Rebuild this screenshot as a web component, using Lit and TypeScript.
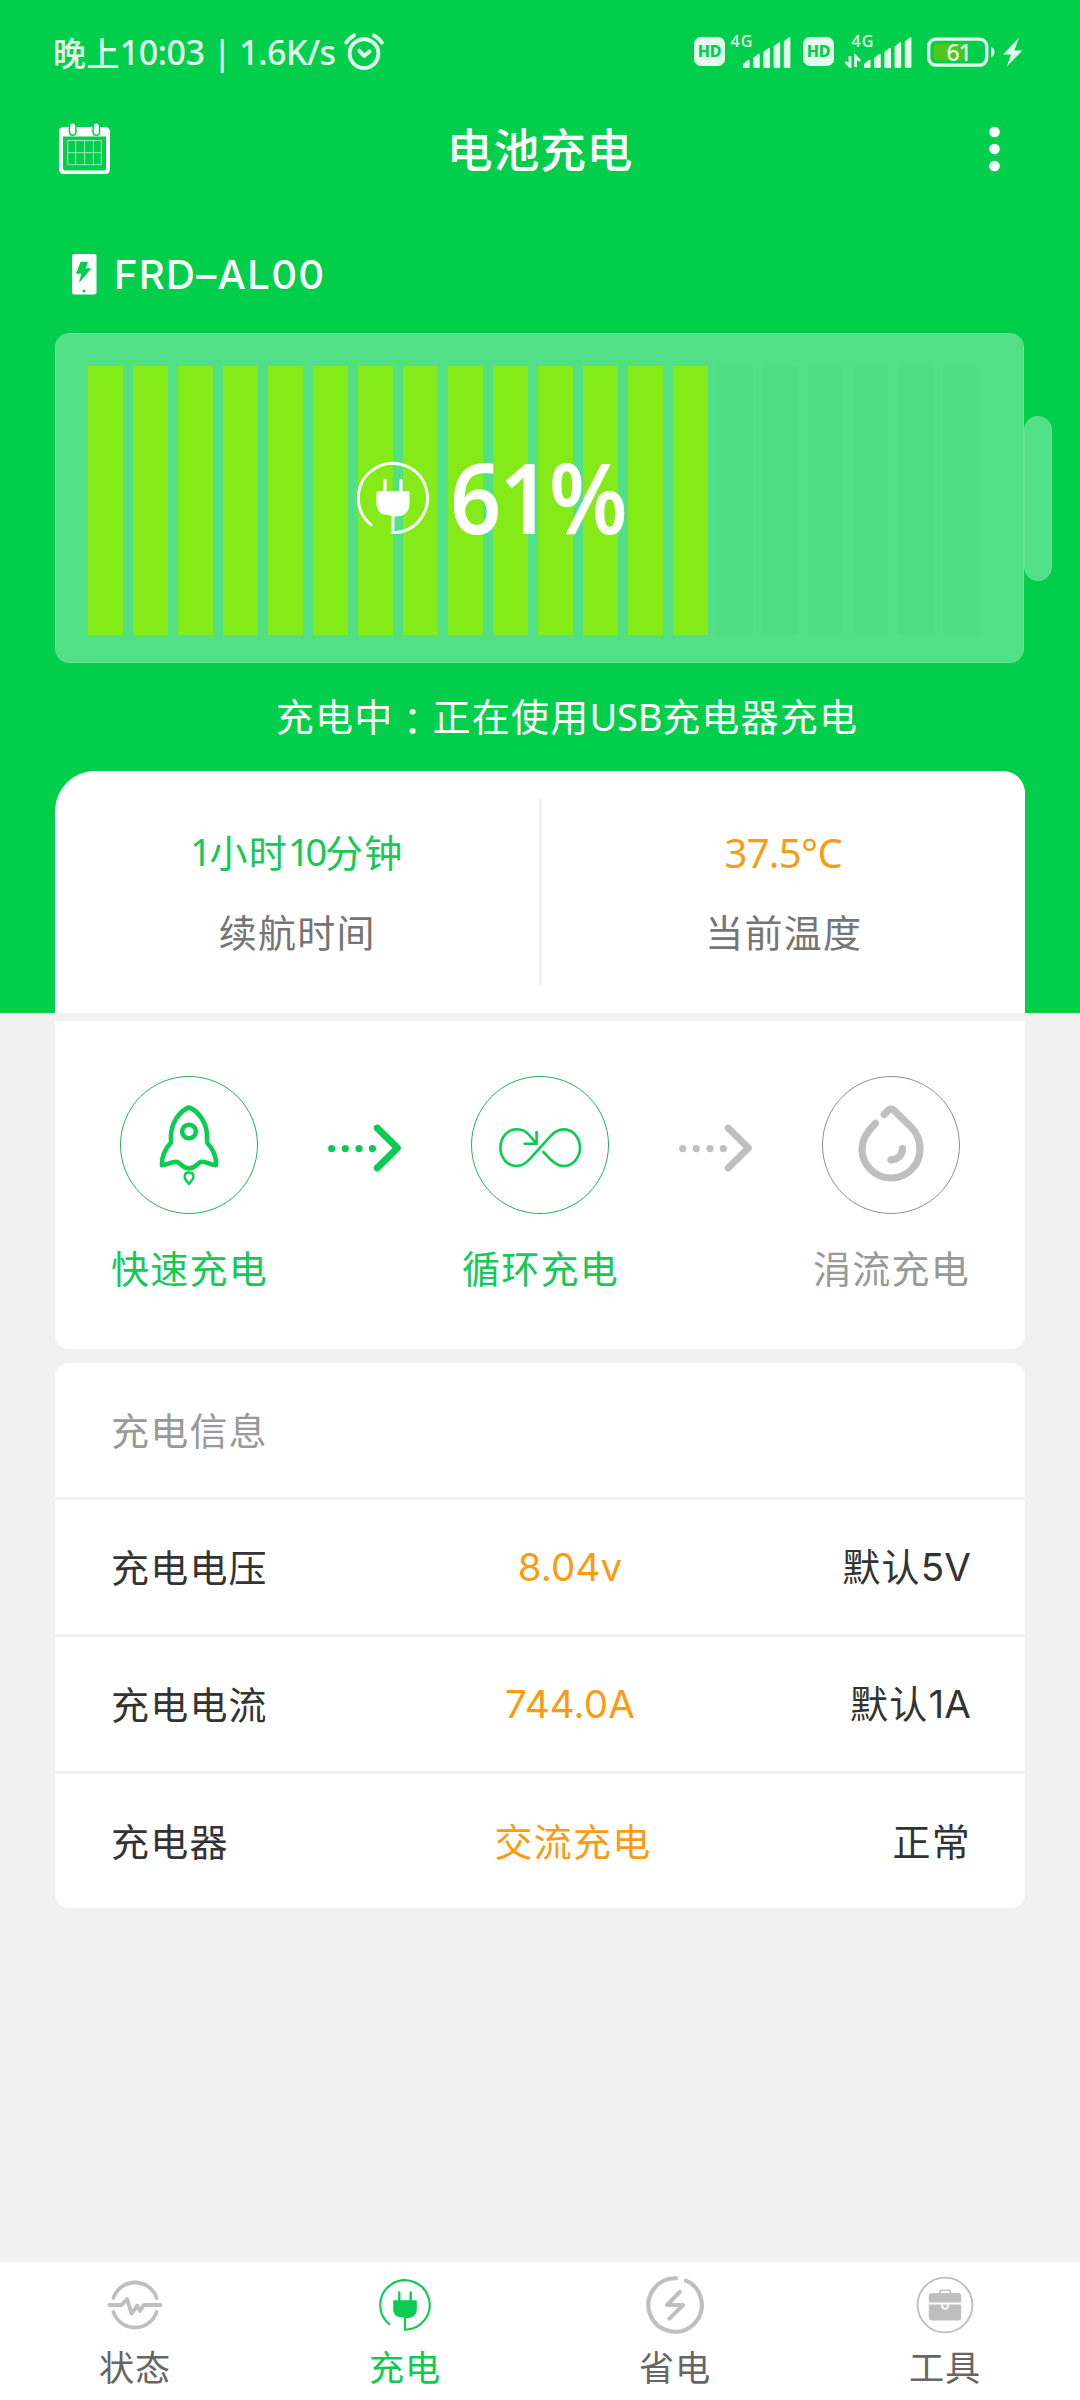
import { LitElement, html, svg, css } from "lit";
import { customElement, property } from "lit/decorators.js";
import { classMap } from "lit/directives/class-map.js";

const plugArt = svg`
  <path d="M-15.6 19.2 A24.7 24.7 0 1 1 0 24.7 V12" fill="none" stroke="currentColor" stroke-width="2.1" stroke-linecap="round"/>
  <path d="M-5.7 -4 V-12.6 M5.7 -4 V-12.6" fill="none" stroke="currentColor" stroke-width="2.3" stroke-linecap="round"/>
  <path d="M-11.8 -4 Q-11.8 -4.8 -11 -4.8 H11 Q11.8 -4.8 11.8 -4 V4 C11.8 10 8 13.2 2 13.2 L-8 11.4 Q-11.8 9 -11.8 4Z" fill="currentColor"/>`;

const navArt: Record<string, unknown> = {
  status: svg`<g fill="none" stroke="currentColor" stroke-width="3.8" stroke-linecap="round" stroke-linejoin="round">
    <path d="M-21.6 -7 A22.8 22.8 0 0 1 21.6 -7 M-21.6 7 A22.8 22.8 0 0 0 21.6 7"/>
    <path d="M-25.6 0 H-13.3 L-8 -6 L-3.4 8.6 L2.2 .6 L5 6 L8.8 0 H25.6"/></g>`,
  charge: plugArt,
  save: svg`<g fill="none" stroke="currentColor" stroke-width="4.1" stroke-linecap="round" stroke-linejoin="round">
    <path d="M11 -24.4 A26.7 26.7 0 1 1 1 -26.7"/>
    <path d="M4.8 -13 L-8 0 H8.2 L-5.6 13.6"/></g>`,
  tools: svg`
    <circle r="27.4" fill="none" stroke="currentColor" stroke-width="1.9"/>
    <path d="M-5.2 -11 V-13.4 Q-5.2 -14.7 -4 -14.7 H4.2 Q5.4 -14.7 5.4 -13.4 V-11" fill="none" stroke="currentColor" stroke-width="1.6"/>
    <path d="M-16.2 -2.5 V-9 Q-16.2 -12 -13.2 -12 H13.2 Q16.2 -12 16.2 -9 V-2.5Z M-16.2 -.6 H16.2 V12.5 Q16.2 15.5 13.2 15.5 H-13.2 Q-16.2 15.5 -16.2 12.5Z" fill="currentColor"/>
    <path d="M-3 -1.4 V1 A3 3 0 0 0 3 1 V-1.4" fill="none" stroke="#fff" stroke-width="1.7"/>`,
};

const stageArt: Record<string, unknown> = {
  rocket: svg`<g fill="none" stroke="currentColor" stroke-linejoin="round">
    <path stroke-width="4.6" d="M0 -37.5 C-10 -34 -18 -21 -18 -9 V-2.5 C-24 4 -27.5 12 -27 20.3 C-22 19.8 -18 16.8 -13 16.8 C-8.5 16.8 -7 23.5 0 23.5 C7 23.5 8.5 16.8 13 16.8 C18 16.8 22 19.8 27 20.3 C27.5 12 24 4 18 -2.5 V-9 C18 -21 10 -34 0 -37.5Z"/>
    <circle cy="-13.5" r="6.8" stroke-width="4.6"/>
    <path stroke-width="2.4" d="M0 27.5 C-5 27.5 -5.2 32 -3.4 34.6 L0 39 L3.4 34.6 C5.2 32 5 27.5 0 27.5Z"/></g>`,
  loop: svg`<path fill="none" stroke="currentColor" stroke-width="2.6" stroke-linecap="round"
    d="M-3.4 -1.2 L-10 -9 C-14 -13.5 -17 -15.8 -23.5 -15.8 C-33 -15.8 -39.6 -7 -39.6 2.8 C-39.6 12.5 -33 21 -23.5 21 C-17.5 21 -14.5 18.5 -9 12.6 L11 -9.4 C15 -13.6 18 -15.6 23.5 -15.6 C33 -15.6 40 -7 40 2.8 C40 12.5 33 21 23.5 21 C17.5 21 14 18 10 14 L3.4 7 M-3.4 -13 V-1.2 H-15.4"/>`,
  drop: svg`<g fill="none" stroke="currentColor" stroke-width="7.2" stroke-linecap="round" stroke-linejoin="round">
    <path d="M-15.5 -21.6 C-24 -13.5 -29 -6 -29 4 A29 29 0 0 0 29 4 C29 -6 26 -12 20 -18 L3.5 -34.3 Q0 -37.5 -3 -34.6 L-6.8 -30.6"/>
    <path d="M11.5 3.5 C11.5 10 7 14.6 0 14.8"/></g>`,
};

@customElement("status-bar")
export class StatusBar extends LitElement {
  static styles = css`
    :host { display: flex; height: 106px; padding: 0 57px 0 53px; align-items: center; color: #e3fbeb;
      font-family: "Noto Sans", "Noto Sans CJK SC", sans-serif; box-sizing: border-box; }
    .clock { display: flex; white-space: pre; font-size: 34px; line-height: 50px; font-weight: 500; margin-top: -2px; }
    .cn { font-family: "Noto Sans CJK SC", sans-serif; font-size: 33px; letter-spacing: 0.4px; }
    .num { letter-spacing: -0.5px; }
    .alarm { width: 42px; height: 42px; margin-left: 7px; margin-top: -3px; }
    .right { margin-left: auto; display: flex; align-items: flex-start; height: 34px; margin-top: -5px; }
    .hd { width: 31px; height: 29px; margin-top: 3px; border-radius: 7px; background: #e3fbeb; color: #01cf4c;
      font: 800 16px/29px "Noto Sans", sans-serif; text-align: center; letter-spacing: -0.3px; }
    .net { display: block; width: 62px; height: 44px; margin: -10px 11px 0 5px; }
    .net.second { width: 69px; margin: -10px 14px 0 10px; }
    .g { font: 500 16px "Noto Sans", sans-serif; }
    .batt { display: block; width: 96px; height: 34px; }
    .pct { font: 500 23px "Noto Sans", sans-serif; letter-spacing: -1px; }
  `;
  private bars(x: number) {
    const tops = [26, 20, 14, 8.5, 3.5];
    return tops.map((t, i) => {
      const l = x + i * 10.2;
      return svg`<path fill="currentColor" d="M${l} 32.5 V${t + 4} L${l + 5} ${t} Q${l + 6.6} ${t - 1} ${l + 6.6} ${t + 1} V32.5 Q${l + 6.6} 34 ${l + 5.4} 34 H${l + 1.2} Q${l} 34 ${l} 32.5Z"/>`;
    });
  }
  render() {
    return html`
      <div class="clock"><span class="cn">晚上</span><span class="num">10:03 | 1.6K/s</span></div>
      <svg class="alarm" viewBox="0 0 42 42" fill="none" stroke="currentColor" stroke-width="3.9" stroke-linecap="round" stroke-linejoin="round">
        <circle cx="21" cy="22.6" r="14.4"/><path d="M3.2 11.6 Q6 7 11 4.4 M38.8 11.6 Q36 7 31 4.4 M16.2 19.6 L21 25 L26.6 20.4"/>
      </svg>
      <div class="right">
        <div class="hd">HD</div>
        <svg class="net" viewBox="0 -10 62 44"><text class="g" x="0.5" y="13" fill="currentColor">4G</text>${this.bars(13)}</svg>
        <div class="hd">HD</div>
        <svg class="net second" viewBox="0 -10 69 44">
          <text class="g" x="7.5" y="13" fill="currentColor">4G</text>
          <path d="M6 22 V32.5 L1.6 28 M11.6 33 V22.5 L16 27" fill="none" stroke="currentColor" stroke-width="2.8"/>${this.bars(20)}
        </svg>
        <svg class="batt" viewBox="0 0 96 34">
          <rect x="1.7" y="5.1" width="58" height="26" rx="7" fill="none" stroke="currentColor" stroke-width="3.4"/>
          <rect x="6.5" y="10" width="31" height="16.4" rx="3" fill="#4fc71a"/>
          <path d="M64 13 Q67.6 14 67.6 18 Q67.6 22 64 23.4Z" fill="currentColor"/>
          <text class="pct" x="19.5" y="26.6" fill="currentColor">61</text>
          <path d="M92 3.6 L76 20.6 H84 L79.6 32.8 L95.4 16.6 H87.4Z" fill="currentColor"/>
        </svg>
      </div>`;
  }
}

@customElement("battery-meter")
export class BatteryMeter extends LitElement {
  @property({ type: Number }) level = 0;
  static styles = css`
    :host { display: flex; align-items: center; margin: 18px 0 0 55px; height: 330px; }
    .body { position: relative; box-sizing: border-box; width: 969px; height: 330px; padding: 32px 0 27px 32px; display: flex; gap: 10px;
      border: 1px solid #67e394; border-radius: 14px; background: #53df85; }
    .cell { width: 35px; background: #4edd83; }
    .cell.on { background: #84eb19; }
    .cap { box-sizing: border-box; width: 28px; height: 165px; border: 1px solid #67e394; border-radius: 14px; background: #53df85; }
    .readout { position: absolute; inset: 0; padding-left: 295px; display: flex; align-items: center; color: #fff; gap: 15px; }
    .plug { width: 84px; height: 84px; }
    .value { font: 600 97px/120px "Noto Sans", sans-serif; letter-spacing: -2px; margin-top: -4px; transform: scaleX(0.925); transform-origin: left; }
  `;
  render() {
    const on = Math.round((this.level / 100) * 22.5);
    return html`
      <div class="body">
        ${Array.from({ length: 20 }, (_, i) => html`<div class=${classMap({ cell: true, on: i < on })}></div>`)}
        <div class="readout">
          <svg class="plug" viewBox="-30 -30 60 60">${plugArt}</svg>
          <span class="value">${this.level}%</span>
        </div>
      </div>
      <div class="cap"></div>`;
  }
}

@customElement("app-root")
export class AppRoot extends LitElement {
  static styles = css`
    :host { display: flex; flex-direction: column; width: 1080px; height: 2400px; overflow: hidden; background: #f1f1f1;
      font-family: "Noto Sans CJK SC", sans-serif; font-size: 38px; letter-spacing: 1.2px; line-height: 56px; color: #333; }
    .top { background: #01cf4c; height: 1013px; color: #fff; display: flex; flex-direction: column; }
    .bar { height: 88px; padding: 0 80px 0 59px; display: grid; grid-template-columns: 1fr auto 1fr; align-items: center; }
    .calendar { width: 51px; height: 52px; margin-top: -2px; }
    .title { font-size: 46px; font-weight: 500; line-height: 64px; letter-spacing: 0.6px; margin-top: -6px; padding-left: 21px; }
    .more { width: 11px; height: 46px; margin-top: -2px; justify-self: end; }
    .device { height: 81px; margin-top: 40px; padding-left: 72px; display: flex; align-items: center; gap: 17px; }
    .phone { width: 25px; height: 41px; }
    .model { font: 500 40px/56px "Inter", sans-serif; letter-spacing: 1.3px; }
    .note { height: 108px; box-sizing: border-box; padding: 0 0 3px 54px; display: flex; align-items: center; justify-content: center; }
    .colon { display: inline-block; transform: translateY(4px); font-family: "Noto Sans CJK TC", sans-serif; }
    .usb { font-family: "Noto Sans", sans-serif; letter-spacing: -0.2px; }
    .card { margin: 0 55px; background: #fff; box-sizing: border-box; }
    .summary { height: 242px; border-radius: 40px 22px 0 0; padding: 28px 0; display: flex; }
    .rule { width: 3px; background: #f1f1f1; }
    .stat { flex: 1; display: flex; flex-direction: column; align-items: center; gap: 24px; padding-top: 24px; line-height: 56px; }
    .stat .v { display: flex; height: 56px; }
    .time { color: #14c955; }
    .temp { color: #f99c12; font-family: "Noto Sans", sans-serif; font-size: 40px; letter-spacing: -0.7px; padding-top: 2px; box-sizing: border-box; }
    .dig { font-family: "Noto Sans", sans-serif; letter-spacing: -4.2px; margin-right: 2px; }
    .lab { color: #757575; padding-left: 1px; }
    .stages { margin-top: 8px; height: 328px; border-radius: 0 0 14px 14px; padding: 55px 50px 0; display: flex; justify-content: space-between; align-items: flex-start; }
    .stage { width: 168px; display: flex; flex-direction: column; align-items: center; color: #14c955; }
    .stage.idle { color: #999; }
    .ring { display: block; width: 138px; height: 138px; }
    .name { margin-top: 25px; white-space: nowrap; padding-left: 1px; }
    .art { color: #09cd50; }
    .idle .art { color: #bfbfbf; }
    .arrow { width: 74px; height: 48px; margin-top: 48px; color: #09cd50; }
    .arrow.idle { color: #bfbfbf; }
    .info { margin-top: 14px; height: 545px; border-radius: 14px; overflow: hidden; display: flex; flex-direction: column; gap: 3px; background: #f1f1f1; }
    .row { flex: 1; background: #fff; padding: 0 54px 2px 56px; display: grid; grid-template-columns: 341px 242px 1fr; align-items: center; box-sizing: border-box; }
    .row .mid { text-align: center; color: #f99c12; }
    .row .mid .lat { margin-right: 6px; }
    .row .end { text-align: right; }
    .caption { color: #999; }
    .lat { font-family: "Inter", sans-serif; font-size: 38.6px; letter-spacing: 0.1px; }
    .nav { margin-top: auto; height: 138px; background: #fff; display: grid; grid-template-columns: repeat(4, 1fr); }
    .tab { display: flex; flex-direction: column; align-items: center; padding-top: 13px; color: #666; font-size: 35.2px; letter-spacing: 0.8px; line-height: 50px; }
    .tab svg { width: 60px; height: 60px; color: #bfbfbf; }
    .tab span { margin-top: 6px; }
    .tab.active, .tab.active svg { color: #0bcb50; }
  `;

  private stage(art: string, name: string, idle = false) {
    return html`<div class=${classMap({ stage: true, idle })}>
      <svg class="ring" viewBox="-69 -69 138 138">
        <circle r="68.5" fill="none" stroke=${idle ? "#8f8f8f" : "#22b355"} stroke-width="1"/>
        <g class="art">${stageArt[art]}</g>
      </svg>
      <div class="name">${name}</div></div>`;
  }
  private arrow(idle = false) {
    return html`<svg class=${classMap({ arrow: true, idle })} viewBox="0 0 74 48">
      ${[3.7, 17.3, 31, 44.4].map((x) => svg`<circle cx=${x} cy="24.6" r="3.6" fill="currentColor"/>`)}
      <path d="M49.2 4 L69.4 24 L49.2 44" fill="none" stroke="currentColor" stroke-width="6.8" stroke-linecap="round" stroke-linejoin="round"/>
    </svg>`;
  }
  private row(label: string, mid: unknown, end: unknown) {
    return html`<div class="row"><div>${label}</div><div class="mid">${mid}</div><div class="end">${end}</div></div>`;
  }
  private tab(icon: string, label: string, active = false) {
    return html`<div class=${classMap({ tab: true, active })}><svg viewBox="-30 -30 60 60">${navArt[icon]}</svg><span>${label}</span></div>`;
  }

  render() {
    return html`
      <div class="top">
        <status-bar></status-bar>
        <div class="bar">
          <svg class="calendar" viewBox="0 0 51 52">
            <path fill="#fff" fill-rule="evenodd" d="M5 4 H46 Q51 4 51 9 V46 Q51 51 46 51 H5 Q0 51 0 46 V9 Q0 4 5 4Z M4 13.4 V45 Q4 47.6 6.6 47.6 H44.4 Q47 47.6 47 45 V13.4Z"/>
            <path d="M13.7 3 V9 M37.3 3 V9" stroke="#01cf4c" stroke-width="8" stroke-linecap="round"/>
            <path d="M13.7 3 V9 M37.3 3 V9" stroke="#fff" stroke-width="5" stroke-linecap="round"/>
            <path d="M8.8 17.5 H42.3 V41.7 H8.8Z M8.8 29.7 H42.3 M16.7 17.5 V41.7 M25.6 17.5 V41.7 M34.4 17.5 V41.7" fill="none" stroke="#fff" stroke-opacity=".6" stroke-width="1"/>
          </svg>
          <div class="title">电池充电</div>
          <svg class="more" viewBox="0 0 11 46" fill="#fff"><circle cx="5.5" cy="6" r="5.3"/><circle cx="5.5" cy="23" r="5.3"/><circle cx="5.5" cy="40" r="5.3"/></svg>
        </div>
        <div class="device">
          <svg class="phone" viewBox="0 0 25 41"><rect width="24.5" height="40.5" rx="2.5" fill="#fff"/>
            <path d="M8.6 7.7 H16 L13.8 14.3 H19.3 L7 29 L9.3 19.7 H4Z" fill="#01cf4c"/><circle cx="12" cy="37" r="1.5" fill="#01cf4c"/></svg>
          <span class="model">FRD–AL00</span>
        </div>
        <battery-meter .level=${61}></battery-meter>
        <div class="note"><span>充电中<span class="colon">：</span>正在使用<span class="usb">USB</span>充电器充电</span></div>
        <div class="card summary">
          <div class="stat"><div class="v time"><span class="dig">1</span><span>小时</span><span class="dig">10</span><span>分钟</span></div><div class="lab">续航时间</div></div>
          <div class="rule"></div>
          <div class="stat"><div class="v temp">37.5°C</div><div class="lab">当前温度</div></div>
        </div>
      </div>
      <div class="card stages">
        ${this.stage("rocket", "快速充电")}${this.arrow()}${this.stage("loop", "循环充电")}${this.arrow(true)}${this.stage("drop", "涓流充电", true)}
      </div>
      <div class="card info">
        <div class="row caption"><div>充电信息</div></div>
        ${this.row("充电电压", html`<span class="lat">8.04v</span>`, html`默认<span class="lat">5V</span>`)}
        ${this.row("充电电流", html`<span class="lat">744.0A</span>`, html`默认<span class="lat">1A</span>`)}
        ${this.row("充电器", "交流充电", "正常")}
      </div>
      <div class="nav">
        ${this.tab("status", "状态")}${this.tab("charge", "充电", true)}${this.tab("save", "省电")}${this.tab("tools", "工具")}
      </div>`;
  }
}
